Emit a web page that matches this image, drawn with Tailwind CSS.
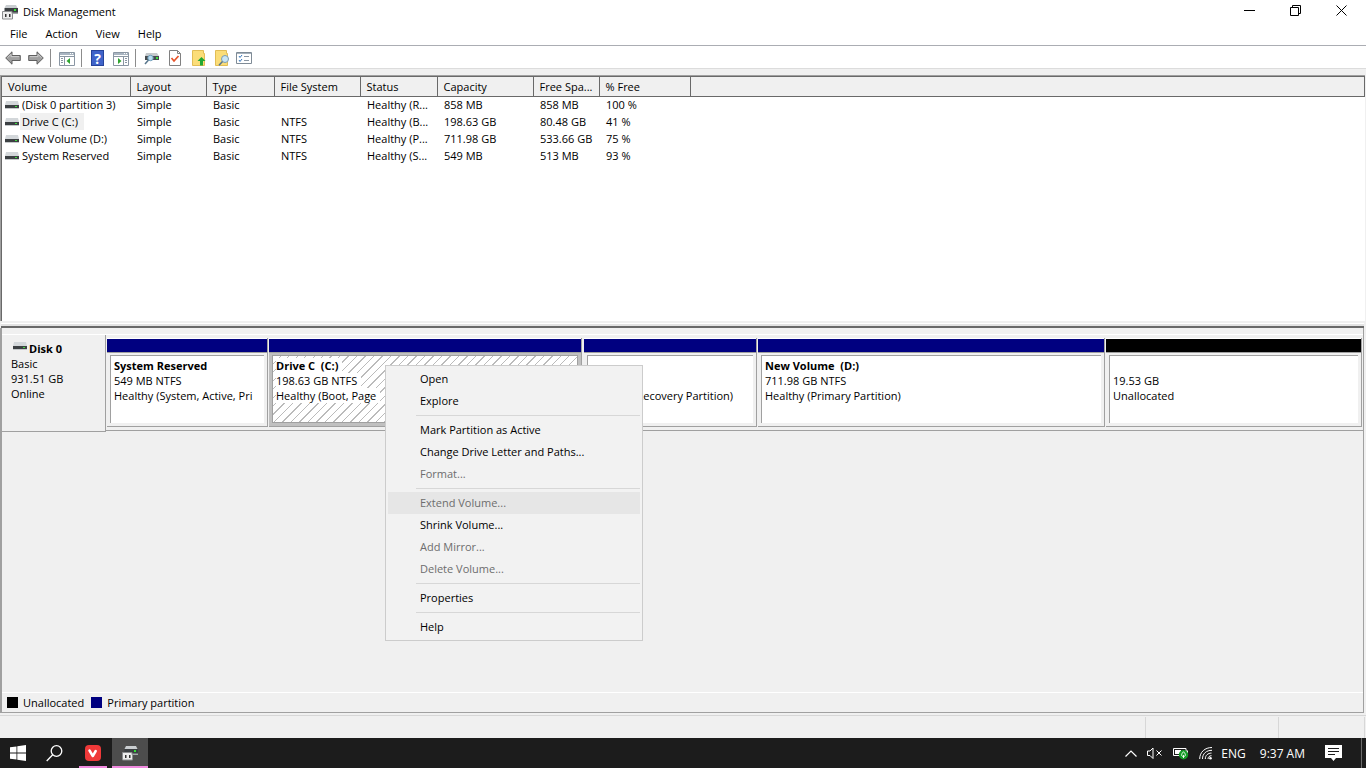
<!DOCTYPE html>
<html lang="en">
  <head>
    <meta charset="UTF-8" />
    <meta name="viewport" content="width=device-width, initial-scale=1.0" />
    <title>Disk Management</title>
    <script src="https://cdn.jsdelivr.net/npm/@tailwindcss/browser@4"></script>
  </head>

  <body class="relative flex h-screen flex-col overflow-hidden bg-[#f0f0f0] font-['Open_Sans','Noto_Sans',sans-serif] text-[11px] leading-[15px] text-black">
    <!-- shared icons -->
    <svg class="hidden">
      <symbol id="drive" viewBox="0 0 14 8">
        <path d="M1 0h12l1 4H0z" fill="#d3d7da" />
        <path d="M0 4h14v3H0z" fill="#3c4043" />
        <path d="M0 7h14v1H0z" fill="#c4c8ca" />
        <path d="M10 5h2v1h-2z" fill="#3ee03e" />
      </symbol>
      <symbol id="diskmgmt" viewBox="0 0 16 16">
        <path d="M4 1h10l1.500 3h-13z" fill="#c9cdd0" />
        <path d="M2.500 4H16v5H2.500z" fill="#3b3f42" />
        <path d="M9 8.500h7v1.500H9z" fill="#a2a6a9" />
        <path d="M12 5h2v2h-2z" fill="#35e035" />
        <path d="M.5 7.500H10v2h.5v5.500H.5z" fill="#ededed" stroke="#8b8d8f" />
        <path d="M3 10h1.500v3H3zM7 10h1.500v3H7z" fill="#333" />
      </symbol>
      <symbol id="panel" viewBox="0 0 16 14">
        <path d="M.5.500h15v13H.5z" fill="#fff" stroke="#8a96a3" />
        <path d="M1 1h14v2H1z" fill="#a9b5c1" />
        <path d="M11 1h1v1h-1zM13 1h1v1h-1z" fill="#fff" />
        <path d="M1 4.500h14M5.500 5v8M10.500 5v8" stroke="#8a96a3" />
      </symbol>
    </svg>

    <header class="bg-white">
      <div class="flex h-6 items-center">
        <svg class="ml-0.5 size-4"><use href="#diskmgmt" /></svg>
        <h1 class="ml-[5px] flex-1 pb-0.5">Disk Management</h1>
        <div class="flex h-full pr-0.5 pb-[3px]">
          <button aria-label="Minimize" class="flex w-[46px] items-center justify-center">
            <svg class="size-[11px]" viewBox="0 0 11 11" stroke="#000"><path d="M0 5.500h11" /></svg>
          </button>
          <button aria-label="Restore" class="flex w-[46px] items-center justify-center">
            <svg class="size-[11px]" viewBox="0 0 11 11" fill="none" stroke="#000"><path d="M.5 2.500h8v8h-8zM2.500 2V.5h8v8H9" /></svg>
          </button>
          <button aria-label="Close" class="flex w-[46px] items-center justify-center">
            <svg class="size-[11px]" viewBox="0 0 11 11" stroke="#000"><path d="M.5.500l10 10M10.500.500l-10 10" /></svg>
          </button>
        </div>
      </div>

      <nav class="flex h-[21px] items-center gap-[18px] pb-0.5 pl-2.5" aria-label="Menu bar">
        <button>File</button>
        <button>Action</button>
        <button>View</button>
        <button>Help</button>
      </nav>

      <div class="flex h-6 items-center border-y border-t-[#abadb3] border-b-[#dcdcdc] pt-0.5 pl-[5px]">
        <button aria-label="Back">
          <svg class="h-[14px] w-4" viewBox="0 0 16 14"><path d="M.7 7L7 .8v3.700h8.300v5H7v3.700z" fill="#a0a0a0" stroke="#5f5f5f" /><path d="M2.500 6.700L6 3.200v2.400h8" fill="none" stroke="#ccc" /></svg>
        </button>
        <button aria-label="Forward" class="ml-[7px]">
          <svg class="h-[14px] w-4" viewBox="0 0 16 14"><path d="M15.300 7L9 .8v3.700H.7v5H9v3.700z" fill="#a0a0a0" stroke="#5f5f5f" /><path d="M2 5.600h8V3.200l3.500 3.500" fill="none" stroke="#ccc" /></svg>
        </button>
        <span class="ml-1.5 h-[18px] w-px bg-[#8c8c8c]"></span>
        <button aria-label="Show or hide console tree" class="ml-2 mt-0.5">
          <svg class="h-[14px] w-4" viewBox="0 0 16 14"><use href="#panel" /><path d="M2 6.500h2M2 8.500h2M2 10.500h2" stroke="#8a96a3" /><path d="M10 5h1v8h-1z" fill="#fff" /><path d="M11 6v6L7.500 9z" fill="#2fa52f" /></svg>
        </button>
        <span class="ml-1.5 h-[18px] w-px bg-[#8c8c8c]"></span>
        <button aria-label="Help" class="ml-[9px] flex h-4 w-[13px] items-center justify-center border border-[#26439a] bg-[#3f63c9] text-[14px] font-bold text-white">?</button>
        <button aria-label="Show or hide action pane" class="ml-[9px] mt-0.5">
          <svg class="h-[14px] w-4" viewBox="0 0 16 14"><use href="#panel" /><path d="M12 6.500h2M12 8.500h2M12 10.500h2" stroke="#8a96a3" /><path d="M5 5h1v8H5z" fill="#fff" /><path d="M5 6v6L8.500 9z" fill="#2fa52f" /></svg>
        </button>
        <span class="ml-1.5 h-[18px] w-px bg-[#8c8c8c]"></span>
        <button aria-label="Rescan disks" class="ml-2">
          <svg class="h-4 w-[15px]" viewBox="0 0 15 16"><path d="M2 3h11l2 3H1z" fill="#c6cacd" /><path d="M1 6h14v4H1z" fill="#464b4e" /><path d="M12 7h2v2h-2z" fill="#3ee03e" /><circle cx="6.500" cy="8" r="2.700" fill="#b9dcf0" stroke="#6b9bb8" /><path d="M4.500 10L1 14" stroke="#58768c" stroke-width="1.500" /></svg>
        </button>
        <button aria-label="Check" class="ml-2.5">
          <svg class="h-4 w-3" viewBox="0 0 12 16"><path d="M.5.500h8l3 3v12H.5z" fill="#fff" stroke="#808080" /><path d="M8.500.500v3h3" fill="none" stroke="#808080" /><path d="M2.500 8l2.500 3 4.500-5" fill="none" stroke="#e8542a" stroke-width="1.700" /></svg>
        </button>
        <button aria-label="Open folder" class="ml-[11px]">
          <svg class="h-4 w-[14px]" viewBox="0 0 14 16"><path d="M.5.500h11v3h1v12H.5z" fill="#fbdd78" stroke="#e2bd55" /><path d="M9.500 7l4 4h-2.500v4.500H8V11H5.500z" fill="#20a833" /></svg>
        </button>
        <button aria-label="Explore folder" class="ml-[9px]">
          <svg class="h-4 w-[15px]" viewBox="0 0 15 16"><path d="M.5.500h11v3h1v12H.5z" fill="#fbdd78" stroke="#e2bd55" /><circle cx="10" cy="9" r="3.500" fill="#c9e5f4" stroke="#7c9cb0" /><path d="M7.500 11.500L4 15.300" stroke="#58768c" stroke-width="1.500" /></svg>
        </button>
        <button aria-label="Settings" class="ml-1.5">
          <svg class="h-3 w-4" viewBox="0 0 16 12"><path d="M.5.500h15v11H.5z" fill="#fff" stroke="#7f8b96" /><path d="M1 1.500h14" stroke="#a5b1bc" /><path d="M8 4.500h5M8 8.500h5" stroke="#8a96a3" /><path d="M3 4l1 1.500L6 3M3 8l1 1.500L6 7" fill="none" stroke="#3978bd" /></svg>
        </button>
      </div>
    </header>

    <main class="mt-1.5 flex min-h-0 flex-1 flex-col">
      <!-- volume list -->
      <section class="mr-px h-[246px] shrink-0 border-t border-l border-[#a0a0a0] bg-[#f0f0f0]">
        <div class="h-full border-t border-l border-[#696969] bg-white">
          <table class="w-full table-fixed border-collapse text-left">
            <colgroup>
              <col class="w-[128px]" />
              <col class="w-[76px]" />
              <col class="w-[68px]" />
              <col class="w-[86px]" />
              <col class="w-[77px]" />
              <col class="w-[96px]" />
              <col class="w-[66px]" />
              <col class="w-[91px]" />
              <col />
            </colgroup>
            <thead>
              <tr class="h-[19px] border-b border-[#696969] bg-[#f0f0f0] *:border-r *:border-[#696969] *:p-0 *:pl-1.5 *:font-normal">
                <th>Volume</th>
                <th>Layout</th>
                <th>Type</th>
                <th>File System</th>
                <th>Status</th>
                <th>Capacity</th>
                <th>Free Spa...</th>
                <th>% Free</th>
                <th aria-label="Empty"></th>
              </tr>
            </thead>
            <tbody class="*:h-[17px] **:[td]:p-0 **:[td]:pl-[7px] **:[td]:whitespace-nowrap">
              <tr>
                <td><div class="-ml-1 flex items-center gap-px"><svg class="h-2 w-[14px]"><use href="#drive" /></svg><span class="px-0.5">(Disk 0 partition 3)</span></div></td>
                <td>Simple</td><td>Basic</td><td></td><td>Healthy (R...</td><td>858 MB</td><td>858 MB</td><td>100 %</td><td></td>
              </tr>
              <tr>
                <td><div class="-ml-1 flex items-center gap-px"><svg class="h-2 w-[14px]"><use href="#drive" /></svg><span class="bg-[#f0f0f0] pr-1.5 pl-0.5 leading-[17px]">Drive C (C:)</span></div></td>
                <td>Simple</td><td>Basic</td><td>NTFS</td><td>Healthy (B...</td><td>198.63 GB</td><td>80.48 GB</td><td>41 %</td><td></td>
              </tr>
              <tr>
                <td><div class="-ml-1 flex items-center gap-px"><svg class="h-2 w-[14px]"><use href="#drive" /></svg><span class="px-0.5">New Volume (D:)</span></div></td>
                <td>Simple</td><td>Basic</td><td>NTFS</td><td>Healthy (P...</td><td>711.98 GB</td><td>533.66 GB</td><td>75 %</td><td></td>
              </tr>
              <tr>
                <td><div class="-ml-1 flex items-center gap-px"><svg class="h-2 w-[14px]"><use href="#drive" /></svg><span class="px-0.5">System Reserved</span></div></td>
                <td>Simple</td><td>Basic</td><td>NTFS</td><td>Healthy (S...</td><td>549 MB</td><td>513 MB</td><td>93 %</td><td></td>
              </tr>
            </tbody>
          </table>
        </div>
      </section>

      <!-- splitter -->
      <div class="mr-0.5 ml-px h-[7px] shrink-0 border-b-2 border-[#696969] bg-[#f0f0f0] pt-0.5"><div class="h-[3px] border-t border-white bg-[#e3e3e3]"></div></div>

      <!-- graphical view -->
      <section class="mr-0.5 flex min-h-0 flex-1 flex-col border-r border-b border-l-2 border-[#a0a0a0]">
        <div class="mt-1.5 flex h-[98px] border-t border-white">
          <div class="w-[104px] border-r border-b border-[#a0a0a0] pt-1.5 pl-[9px]">
            <div class="flex gap-0.5 pl-0.5"><svg class="mt-px h-2 w-[14px]"><use href="#drive" /></svg><h2 class="font-bold">Disk 0</h2></div>
            <p>Basic</p>
            <p>931.51 GB</p>
            <p>Online</p>
          </div>
          <div class="mb-px grid flex-1 grid-cols-[162fr_315fr_174fr_348fr_257fr] border-b border-[#a0a0a0] pt-[3px] pl-px">
            <article class="mr-px mb-[3px] flex min-w-0 flex-col border-r border-b border-[#a0a0a0]">
              <div class="h-[15px] border-t border-b border-t-white border-b-[#a0a0a0] bg-[#000080]"></div>
              <div class="min-h-0 flex-1 p-[3px] pt-0.5">
                <div class="h-full overflow-hidden border-t border-l border-[#a0a0a0] bg-white pt-0.5 pl-[3px] whitespace-nowrap">
                  <h3 class="font-bold">System Reserved</h3>
                  <p>549 MB NTFS</p>
                  <p>Healthy (System, Active, Pri</p>
                </div>
              </div>
            </article>
            <article class="mr-0.5 mb-[3px] flex min-w-0 flex-col border-r border-b border-[#a0a0a0]">
              <div class="h-[15px] border-t border-b border-t-white border-b-[#a0a0a0] bg-[#000080]"></div>
              <div class="min-h-0 flex-1 bg-[#c0c0c0] p-[3px] pt-0.5">
                <div class="flex h-full flex-col items-start overflow-hidden border border-[#a0a0a0] bg-white bg-[repeating-linear-gradient(135deg,#fff_0px,#fff_5px,#bbb_5px,#bbb_6px)] pt-0.5 pl-[3px] whitespace-nowrap">
                  <h3 class="bg-white pr-1 font-bold whitespace-pre">Drive C  (C:)</h3>
                  <p class="bg-white pr-1">198.63 GB NTFS</p>
                  <p class="bg-white pr-1">Healthy (Boot, Page</p>
                </div>
              </div>
            </article>
            <article class="mr-px mb-[3px] flex min-w-0 flex-col border-r border-b border-[#a0a0a0]">
              <div class="h-[15px] border-t border-b border-t-white border-b-[#a0a0a0] bg-[#000080]"></div>
              <div class="min-h-0 flex-1 p-[3px] pt-0.5">
                <div class="h-full overflow-hidden border-t border-l border-[#a0a0a0] bg-white pt-[17px] pl-[3px] whitespace-nowrap">
                  <p>858 MB</p>
                  <p>Healthy (Recovery Partition)</p>
                </div>
              </div>
            </article>
            <article class="mr-px mb-[3px] flex min-w-0 flex-col border-r border-b border-[#a0a0a0]">
              <div class="h-[15px] border-t border-b border-t-white border-b-[#a0a0a0] bg-[#000080]"></div>
              <div class="min-h-0 flex-1 p-[3px] pt-0.5">
                <div class="h-full overflow-hidden border-t border-l border-[#a0a0a0] bg-white pt-0.5 pl-[3px] whitespace-nowrap">
                  <h3 class="font-bold whitespace-pre">New Volume  (D:)</h3>
                  <p>711.98 GB NTFS</p>
                  <p>Healthy (Primary Partition)</p>
                </div>
              </div>
            </article>
            <article class="mr-px mb-[3px] flex min-w-0 flex-col border-r border-b border-[#a0a0a0]">
              <div class="h-[15px] border-t border-b border-t-white border-b-[#a0a0a0] bg-black"></div>
              <div class="min-h-0 flex-1 p-[3px] pt-0.5">
                <div class="h-full overflow-hidden border-t border-l border-[#a0a0a0] bg-white pt-[17px] pl-[3px] whitespace-nowrap">
                  <p>19.53 GB</p>
                  <p>Unallocated</p>
                </div>
              </div>
            </article>
          </div>
        </div>

        <!-- legend -->
        <div class="mt-auto flex h-5 items-center gap-[7px] border-t border-white pl-[5px]">
          <span class="flex items-center gap-[5px]"><i class="size-[11px] bg-black"></i>Unallocated</span>
          <span class="flex items-center gap-[5px]"><i class="size-[11px] bg-[#000080]"></i>Primary partition</span>
        </div>
      </section>
    </main>

    <!-- status bar -->
    <div class="mt-0.5 flex h-[23px] shrink-0 border-t border-[#d7d7d7] pt-px pr-px *:border-r *:border-[#d7d7d7]">
      <span class="flex-1"></span>
      <span class="w-[133px]"></span>
      <span class="w-[86px]"></span>
    </div>

    <footer class="flex h-[30px] shrink-0 items-center bg-[#1c1c1c] text-[12px] text-white">
      <button aria-label="Start" class="flex h-full w-9 items-center justify-center">
        <svg class="size-4" viewBox="0 0 16 16" fill="#fff"><path d="M0 2.300L6.500 1.400v6.100H0zM7.300 1.300L16 0v7.500H7.300zM0 8.400h6.500v6.200L0 13.700zM7.300 8.400H16V16l-8.700-1.300z" /></svg>
      </button>
      <button aria-label="Search" class="flex h-full w-9 items-center justify-center">
        <svg class="size-[17px]" viewBox="0 0 17 17" fill="none" stroke="#fff" stroke-width="1.300"><circle cx="10.500" cy="6" r="5.300" /><path d="M6.700 9.800L.7 16" /></svg>
      </button>
      <button aria-label="Vivaldi" class="mx-[7px] flex h-full w-7 items-center justify-center border-b-2 border-[#f08adf] pt-0.5">
        <svg class="size-4" viewBox="0 0 16 16"><rect width="16" height="16" rx="4" fill="#ef3939" /><path d="M4.500 5.500l3.300 5.500 2.900-5" fill="none" stroke="#fff" stroke-width="2.500" stroke-linecap="round" stroke-linejoin="round" /></svg>
      </button>
      <button aria-label="Disk Management" class="-ml-0.5 flex h-full w-9 items-center justify-center border-b-2 border-[#f08adf] bg-[#4d4d4d] pt-0.5">
        <svg class="size-4"><use href="#diskmgmt" /></svg>
      </button>

      <div class="ml-auto flex h-full items-center">
        <button aria-label="Show hidden icons">
          <svg class="h-[7px] w-3" viewBox="0 0 12 7" fill="none" stroke="#fff" stroke-width="1.200"><path d="M.5 6.500L6 1l5.500 5.500" /></svg>
        </button>
        <button aria-label="Volume muted" class="ml-2.5">
          <svg class="h-3 w-4" viewBox="0 0 16 12" fill="none" stroke="#fff"><path d="M.5 4h2.500l3-3v10.500l-3-3H.5zM9.500 3.500l5 5M14.500 3.500l-5 5" /></svg>
        </button>
        <button aria-label="Battery" class="ml-2.5">
          <svg class="h-[14px] w-4" viewBox="0 0 16 14"><path d="M.5 2.500h12.500v7H.5z" fill="none" stroke="#fff" /><path d="M2 4h6v4H2zM13.500 4.500h1.500v3h-1.500z" fill="#fff" /><circle cx="10.500" cy="8.800" r="4.700" fill="#149c26" /><path d="M10.500 12V9M10.500 5.700c3 3 2 4.800 0 4.800s-3-1.800 0-4.800z" fill="none" stroke="#fff" stroke-width=".9" /></svg>
        </button>
        <button aria-label="Network" class="ml-2.5">
          <svg class="size-[14px]" viewBox="0 0 14 14" fill="none" stroke="#fff"><path d="M.7 13C.7 6 6 1.500 13 1.500M3.500 13C3.500 7.500 7.500 4.300 13 4.300M6.300 13c0-3.700 2.700-5.900 6.200-5.900M9 13c0-2 1.500-3.300 3.500-3.300" /><circle cx="11.500" cy="12.200" r="1.300" fill="#fff" stroke="none" /></svg>
        </button>
        <button class="ml-2">ENG</button>
        <button class="ml-3.5"><time datetime="09:37">9:37 AM</time></button>
        <button aria-label="Notifications" class="ml-5">
          <svg class="h-4 w-[17px]" viewBox="0 0 17 16"><path d="M0 0h17v13h-6l-2.500 3L6 13H0z" fill="#fff" /><path d="M3 3.500h11M3 6.500h11M3 9.500h7" stroke="#1c1c1c" /></svg>
        </button>
        <span class="mr-1 ml-[19px] h-full w-px bg-[#6b6b6b]"></span>
      </div>
    </footer>

    <!-- context menu of Drive C -->
    <div role="menu" class="absolute top-[365px] left-[385px] flex w-[258px] flex-col border border-[#ccc] bg-[#f2f2f2] p-0.5 *:[button]:h-[22px] *:[button]:shrink-0 *:[button]:pb-0.5 *:[button]:pl-8 *:[button]:text-left *:[button]:disabled:text-[#6d6d6d] *:[hr]:my-[3px] *:[hr]:ml-7 *:[hr]:border-[#d7d7d7]">
      <button role="menuitem">Open</button>
      <button role="menuitem">Explore</button>
      <hr />
      <button role="menuitem">Mark Partition as Active</button>
      <button role="menuitem">Change Drive Letter and Paths...</button>
      <button role="menuitem" disabled>Format...</button>
      <hr />
      <button role="menuitem" disabled class="bg-[#e6e6e6]">Extend Volume...</button>
      <button role="menuitem">Shrink Volume...</button>
      <button role="menuitem" disabled>Add Mirror...</button>
      <button role="menuitem" disabled>Delete Volume...</button>
      <hr />
      <button role="menuitem">Properties</button>
      <hr />
      <button role="menuitem">Help</button>
    </div>
  </body>
</html>
